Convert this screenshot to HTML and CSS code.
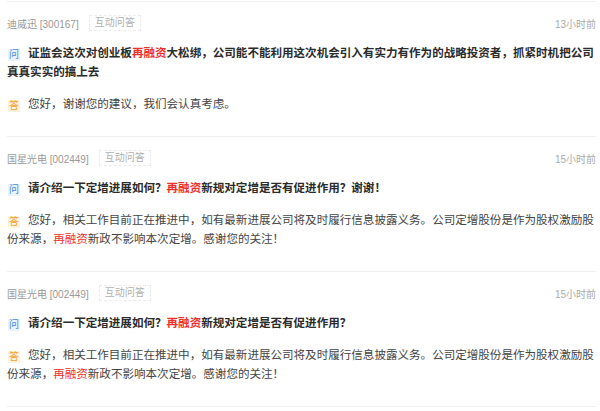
FILE: index.html
```html
<!DOCTYPE html>
<html lang="zh-CN">
<head>
    <meta charset="UTF-8">
    <meta name="viewport" content="width=device-width, initial-scale=1.0">
    <title>互动问答</title>
    <link rel="stylesheet" href="styles.css">
</head>
<body>

    <div class="qa-list">
        <div class="qa-item">
            <div class="qa-meta">
                <span class="stock">迪威迅 [300167]</span>
                <span class="tag">互动问答</span>
                <span class="time">13小时前</span>
            </div>
            <p class="question"><span class="mark mark-q">问</span>证监会这次对创业板<em class="hl">再融资</em>大松绑，公司能不能利用这次机会引入有实力有作为的战略投资者，抓紧时机把公司真真实实的搞上去</p>
            <p class="answer"><span class="mark mark-a">答</span>您好，谢谢您的建议，我们会认真考虑。</p>
        </div>

        <div class="qa-item">
            <div class="qa-meta">
                <span class="stock">国星光电 [002449]</span>
                <span class="tag">互动问答</span>
                <span class="time">15小时前</span>
            </div>
            <p class="question"><span class="mark mark-q">问</span>请介绍一下定增进展如何？<em class="hl">再融资</em>新规对定增是否有促进作用？谢谢！</p>
            <p class="answer"><span class="mark mark-a">答</span>您好，相关工作目前正在推进中，如有最新进展公司将及时履行信息披露义务。公司定增股份是作为股权激励股份来源，<em class="hl">再融资</em>新政不影响本次定增。感谢您的关注！</p>
        </div>

        <div class="qa-item">
            <div class="qa-meta">
                <span class="stock">国星光电 [002449]</span>
                <span class="tag">互动问答</span>
                <span class="time">15小时前</span>
            </div>
            <p class="question"><span class="mark mark-q">问</span>请介绍一下定增进展如何？<em class="hl">再融资</em>新规对定增是否有促进作用？</p>
            <p class="answer"><span class="mark mark-a">答</span>您好，相关工作目前正在推进中，如有最新进展公司将及时履行信息披露义务。公司定增股份是作为股权激励股份来源，<em class="hl">再融资</em>新政不影响本次定增。感谢您的关注！</p>
        </div>
    </div>

</body>
</html>
```

FILE: styles.css
```css
* {
    margin: 0;
    padding: 0;
    box-sizing: border-box;
    font-family: 'Liberation Sans', 'Noto Sans CJK SC', sans-serif;
}

body {
    background: #fff;
    color: #333;
}

.qa-list {
    margin: 1px 4px 0 7px;
    border-top: 1px solid #f0f0f0;
}

.qa-item {
    padding: 12px 0 22px;
    border-bottom: 1px solid #f0f0f0;
}

/* meta row */
.qa-meta {
    display: flex;
    align-items: center;
    height: 18px;
    font-size: 10px;
    color: #999;
}

.tag {
    margin-left: 10px;
    padding: 0 5px;
    height: 16px;
    line-height: 14px;
    border: 1px dashed #ebebeb;
    color: #b0b0b0;
}

.time {
    margin-left: auto;
    color: #aaa;
}

/* question / answer */
.question, .answer {
    font-size: 11.55px;
    line-height: 19px;
}

.question {
    margin-top: 12px;
    font-weight: bold;
    color: #2b2b2b;
}

.answer {
    margin-top: 13px;
    color: #444;
}

.hl {
    font-style: normal;
    color: #f0302b;
}

.mark {
    display: inline-block;
    width: 12px;
    height: 12px;
    line-height: 12px;
    margin: 0 8px 0 1px;
    font-size: 10px;
    font-weight: normal;
    text-align: center;
    vertical-align: -1px;
}

.mark-q {
    color: #3d8fe0;
    background: #eaf3fc;
}

.mark-a {
    color: #f2a12e;
    background: #fdf2de;
}
```
